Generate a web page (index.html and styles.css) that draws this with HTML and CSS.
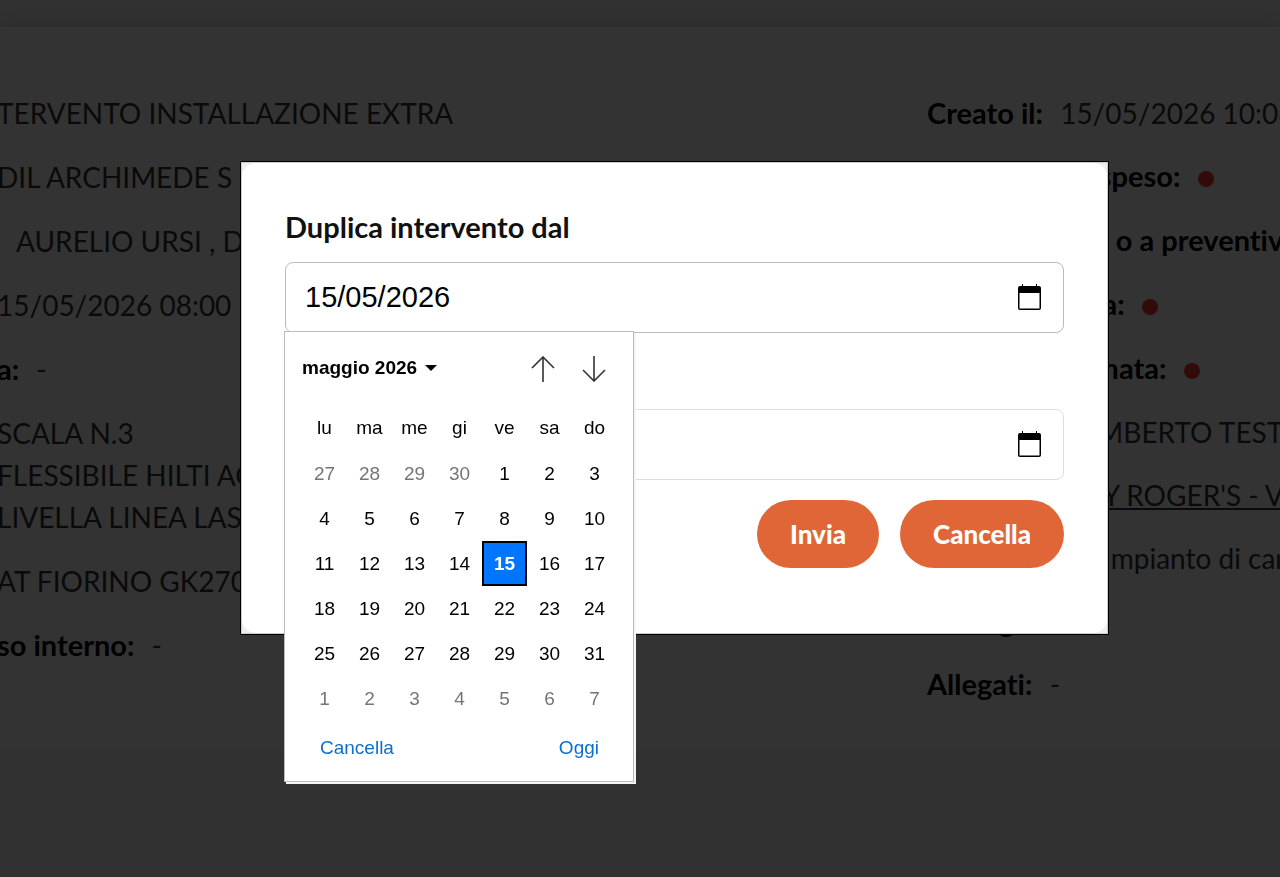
FILE: index.html
```html
<!DOCTYPE html>
<html lang="it">
<head>
  <meta charset="UTF-8" />
  <meta name="viewport" content="width=device-width, initial-scale=1.0" />
  <title>Dettaglio intervento</title>
  <link rel="stylesheet" href="styles.css">
</head>
<body>
  <main class="card">
    <div class="col">
      <p>TERVENTO INSTALLAZIONE EXTRA</p>
      <p>DIL ARCHIMEDE S</p>
      <p class="indent">AURELIO URSI , D</p>
      <p>15/05/2026 08:00</p>
      <p><b>a:</b> -</p>
      <p>SCALA N.3<br>FLESSIBILE HILTI AG<br>LIVELLA LINEA LASER</p>
      <p>AT FIORINO GK270</p>
      <p><b>so interno:</b> -</p>
    </div>
    <div class="col col-right">
      <p><b>Creato il:</b> 15/05/2026 10:08</p>
      <p class="flag"><b>Intervento sospeso:</b> <i class="dot"></i></p>
      <p class="flag"><b>Lavori a conto o a preventivo:</b></p>
      <p class="flag"><b>Firma richiesta:</b> <i class="dot"></i></p>
      <p class="flag"><b>Scelta confermata:</b> <i class="dot"></i></p>
      <p><b>Creato da:</b> UMBERTO TESTA</p>
      <p><b>Cliente:</b> <a href="#">JOLLY ROGER'S - VIA</a></p>
      <p><b>Descrizione:</b> Impianto di cantiere</p>
      <p><b>Immagini:</b></p>
      <p><b>Allegati:</b> -</p>
    </div>
  </main>

  <div class="overlay">
    <div class="modal" role="dialog" aria-modal="true">
      <form class="modal-body">
        <label for="dal">Duplica intervento dal</label>
        <div class="field active">
          <input type="text" id="dal" value="15/05/2026">
          <button type="button" class="cal-btn" aria-label="Apri calendario">
            <svg width="23" height="26" viewBox="0 0 23 26">
              <path d="M4 0h1v2h13V0h1v2h2q2 0 2 2v20q0 2-2 2H2q-2 0-2-2V4q0-2 2-2h2zM1.500 9v15.500h20V9z" fill="#000" fill-rule="evenodd"/>
            </svg>
          </button>

          <div class="picker">
            <div class="picker-head">
              <button type="button" class="month">maggio 2026
                <svg width="12" height="6" viewBox="0 0 12 6"><path d="M0 0h12L6 6z"/></svg>
              </button>
              <div class="arrows">
                <button type="button" aria-label="Mese precedente">
                  <svg width="24" height="26" viewBox="0 0 24 26"><path d="M12 26V1M1 12L12 1l11 11"/></svg>
                </button>
                <button type="button" aria-label="Mese successivo">
                  <svg width="24" height="26" viewBox="0 0 24 26"><path d="M12 0v25M1 14l11 11 11-11"/></svg>
                </button>
              </div>
            </div>
            <table>
              <thead>
                <tr><th>lu</th><th>ma</th><th>me</th><th>gi</th><th>ve</th><th>sa</th><th>do</th></tr>
              </thead>
              <tbody>
                <tr><td class="out">27</td><td class="out">28</td><td class="out">29</td><td class="out">30</td><td>1</td><td>2</td><td>3</td></tr>
                <tr><td>4</td><td>5</td><td>6</td><td>7</td><td>8</td><td>9</td><td>10</td></tr>
                <tr><td>11</td><td>12</td><td>13</td><td>14</td><td class="selected">15</td><td>16</td><td>17</td></tr>
                <tr><td>18</td><td>19</td><td>20</td><td>21</td><td>22</td><td>23</td><td>24</td></tr>
                <tr><td>25</td><td>26</td><td>27</td><td>28</td><td>29</td><td>30</td><td>31</td></tr>
                <tr><td class="out">1</td><td class="out">2</td><td class="out">3</td><td class="out">4</td><td class="out">5</td><td class="out">6</td><td class="out">7</td></tr>
              </tbody>
            </table>
            <div class="picker-foot">
              <button type="button">Cancella</button>
              <button type="button">Oggi</button>
            </div>
          </div>
        </div>

        <label for="al">al</label>
        <div class="field">
          <input type="text" id="al">
          <button type="button" class="cal-btn" aria-label="Apri calendario">
            <svg width="23" height="26" viewBox="0 0 23 26">
              <path d="M4 0h1v2h13V0h1v2h2q2 0 2 2v20q0 2-2 2H2q-2 0-2-2V4q0-2 2-2h2zM1.500 9v15.500h20V9z" fill="#000" fill-rule="evenodd"/>
            </svg>
          </button>
        </div>

        <div class="actions">
          <button type="submit" class="btn">Invia</button>
          <button type="button" class="btn">Cancella</button>
        </div>
      </form>
    </div>
  </div>
</body>
</html>
```

FILE: styles.css
```css
* {
  box-sizing: border-box;
}
body {
  margin: 0;
  padding-top: 27px;
  background: #f3f3f3;
  font-family: Lato, "Open Sans", sans-serif;
  font-size: 28px;
  font-variant-ligatures: none;
  line-height: 42px;
  color: #333;
  overflow: hidden;
}
button {
  border: 0;
  padding: 0;
  background: none;
  font: inherit;
  color: inherit;
  cursor: pointer;
}
svg {
  display: block;
}

/* scheda intervento */
.card {
  display: grid;
  grid-template-columns: 927px minmax(0, 1fr);
  padding: 65px 0 45px;
  background: #fff;
  box-shadow: 0 0 20px rgba(0, 0, 0, 0.15);
}
.col {
  display: flex;
  flex-direction: column;
  gap: 22px;
  margin-left: -3px;
  white-space: nowrap;
}
.col-right {
  gap: 21px;
  margin-left: 0;
  overflow: hidden;
}
.col p {
  margin: 0;
}
.col b {
  margin-right: 10px;
  font-size: 29px;
  color: #000;
}
.col a {
  color: inherit;
}
.col .indent {
  padding-left: 19px;
}
.col .flag {
  min-height: 43px;
}
.dot {
  display: inline-block;
  width: 16px;
  height: 16px;
  border-radius: 50%;
  background: #f33;
}

/* modale */
.overlay {
  position: fixed;
  inset: 0;
  display: flex;
  align-items: flex-start;
  padding: 162px 172px 0 241px;
  background: rgba(0, 0, 0, 0.8);
}
.modal {
  flex: 1;
  border: 1px solid #ccc;
  outline: 1px solid #000;
  background: #eee;
}
.modal-body {
  display: flex;
  flex-direction: column;
  padding: 43px 43px 65px;
  border-radius: 14px;
  background: #fff;
}
.modal-body label {
  margin-bottom: 14px;
  font-size: 29px;
  font-weight: bold;
  color: #111;
}
.field {
  position: relative;
  display: flex;
  align-items: center;
  height: 71px;
  margin-bottom: 20px;
  padding: 0 22px 0 19px;
  border: 1px solid #ddd;
  border-radius: 8px;
}
.field.active {
  border-color: #bbb;
}
.field input {
  flex: 1;
  min-width: 0;
  border: 0;
  outline: 0;
  padding: 0;
  background: none;
  font-family: "Liberation Sans", Arial, sans-serif;
  font-size: 29px;
  color: #000;
}
.cal-btn {
  padding-bottom: 2px;
}
.actions {
  display: flex;
  justify-content: flex-end;
  gap: 21px;
}
.btn {
  height: 68px;
  padding: 0 33px;
  border-radius: 34px;
  background: #e06638;
  color: #fff;
  font-size: 26px;
  font-weight: 900;
}

/* calendario */
.picker {
  position: absolute;
  z-index: 10;
  top: 68px;
  left: -2px;
  width: 350px;
  padding: 16px 16px 6px 17px;
  border: 1px solid #bbb;
  background: #fff;
  box-shadow: 2px 2px 0 #f4f4f4;
  font-family: "Liberation Sans", Arial, sans-serif;
  font-size: 19px;
  line-height: 22px;
  color: #000;
}
.picker-head {
  display: flex;
  justify-content: space-between;
  align-items: center;
  height: 40px;
  margin-bottom: 16px;
}
.month {
  display: flex;
  align-items: center;
  gap: 8px;
  font-weight: bold;
}
.arrows {
  display: flex;
  gap: 27px;
  padding: 2px 11px 0 0;
}
.arrows path {
  fill: none;
  stroke: #333;
  stroke-width: 1.6;
}
.picker table {
  width: 315px;
  border-collapse: collapse;
  table-layout: fixed;
}
.picker th,
.picker td {
  height: 45px;
  padding: 0;
  text-align: center;
  font-weight: normal;
}
.picker th {
  height: 47px;
}
.picker .out {
  color: #757575;
}
.picker .selected {
  background: #0075ff;
  box-shadow: inset 0 0 0 2px #000;
  color: #fff;
  font-weight: bold;
}
.picker-foot {
  display: flex;
  justify-content: space-between;
  align-items: center;
  height: 54px;
  padding: 0 18px;
  color: #0b6fd0;
}
```
